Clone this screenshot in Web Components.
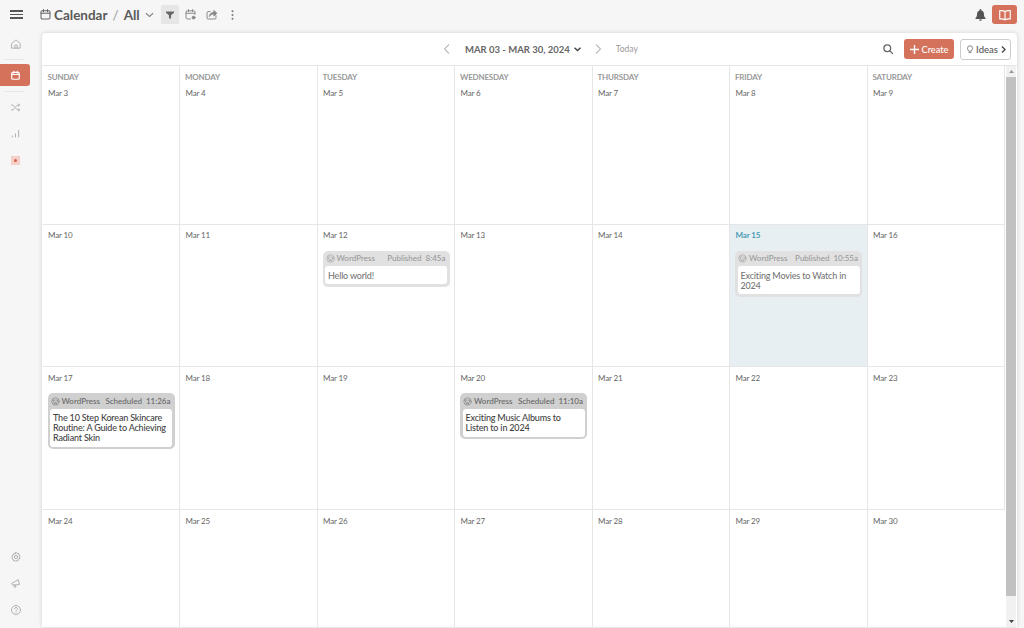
<!DOCTYPE html>
<html>
<head>
<meta charset="utf-8">
<title>Calendar</title>
<style>
html, body { margin: 0; height: 100%; overflow: hidden; background: #f6f6f6; }
body { font-family: "Lato", "Liberation Sans", sans-serif; color: #555; }
</style>
</head>
<body>
<app-shell></app-shell>
<script>
const ICONS = {
    home: '<path d="M2.5 7 8 2.5 13.5 7v6.5h-11z"/><path d="M6.5 13.5V9.5h3v4"/>',
    cal: '<rect x="2.5" y="3.5" width="11" height="10" rx="1.5"/><path d="M2.5 6.5h11M5.5 2v2.5M10.5 2v2.5"/>',
    shuffle: '<path d="M2 4.5h2.5l6 7H14M2 11.5h2.5l1.8-2.1M8.7 6.6l1.8-2.1H14M12.3 2.8 14 4.5l-1.7 1.7M12.3 9.8l1.7 1.7-1.7 1.7"/>',
    bars: '<path d="M3.5 13v-1.5M8 13V8.5M12.5 13V3.5"/>',
    gear: '<circle cx="8" cy="8" r="2.2"/><path d="M8 1.8l1.3 1.5 2-.2.4 1.9 1.8.9-.8 1.9.8 1.9-1.8.9-.4 1.9-2-.2L8 14.2l-1.3-1.5-2 .2-.4-1.9-1.8-.9.8-1.9-.8-1.9 1.8-.9.4-1.9 2 .2z"/>',
    horn: '<path d="M2.5 8.5 11 3.5l1.5 6.5-8.5.8z"/><path d="M5 11l1 2.8 2-.6-.8-2.6"/>',
    help: '<circle cx="8" cy="8" r="6"/><path d="M6.2 6.3a1.9 1.9 0 1 1 2.7 1.8c-.6.3-.9.7-.9 1.4"/><path d="M8 11.2v.4"/>',
    calplus: '<path d="M8 13.5H4A1.5 1.5 0 0 1 2.5 12V5A1.5 1.5 0 0 1 4 3.5h8A1.5 1.5 0 0 1 13.5 5v3M2.5 6.5h11M5.5 2v2.5M10.5 2v2.5"/><circle cx="11.8" cy="11.8" r="1.8" fill="currentColor"/>',
    share: '<path d="M13.5 9.5v3a1 1 0 0 1-1 1h-9a1 1 0 0 1-1-1v-7a1 1 0 0 1 1-1h3"/><path d="M5.5 10c.4-3 2.4-4.5 5.5-4.5V3l3.5 3.5L11 10V7.5c-2.3 0-4.1.7-5.5 2.500z" fill="currentColor"/>',
    search: '<circle cx="7" cy="7" r="4.5"/><path d="M10.5 10.5 14 14"/>',
    bulb: '<path d="M5.8 11C5 10 4 9 4 6.8a4 4 0 0 1 8 0C12 9 11 10 10.2 11z"/><path d="M6.3 13.5h3.400"/>',
    book: '<path d="M8 4C6.5 3 4.5 2.8 2 3v9.5c2.5-.2 4.5 0 6 1 1.5-1 3.5-1.2 6-1V3c-2.500-.2-4.500 0-6 1zM8 4v9.500"/>',
    wp: '<circle cx="8" cy="8" r="6.5"/><path d="M3.5 5.500 6.500 13 8 9l1.500 4 3-7.500M3 5.500h4M9 5.500h4"/>'
};

// stroke icon, name comes from the attribute
class XIcon extends HTMLElement {
    connectedCallback() {
        const size = this.getAttribute('size') || 16;
        const sw = this.getAttribute('sw') || 1.4;
        this.attachShadow({ mode: 'open' });
        this.shadowRoot.innerHTML = `
            <style>:host { display: inline-flex; } svg { display: block; }</style>
            <svg width="${size}" height="${size}" viewBox="0 0 16 16" fill="none" stroke="currentColor"
                 stroke-width="${sw}" stroke-linecap="round" stroke-linejoin="round">${ICONS[this.getAttribute('name')]}</svg>`;
    }
}
customElements.define('x-icon', XIcon);

class AppTopbar extends HTMLElement {
    constructor() {
        super();
        this.attachShadow({ mode: 'open' });
        this.shadowRoot.innerHTML = `
            <style>
                :host { display: flex; align-items: center; height: 33px; padding: 0 7px 4px 10px; box-sizing: border-box; color: #555; }
                .burger { display: flex; flex-direction: column; gap: 2px; width: 13px; margin-right: 16px; }
                .burger i { height: 1.5px; background: #555; display: block; }
                .title { display: flex; align-items: center; font-size: 13.5px; font-weight: 700; color: #5a5a5a; }
                .title x-icon { margin-right: 2px; color: #666; }
                .sep { margin: 0 5px; font-weight: 400; color: #999; }
                .chev { margin-left: 5px; }
                .act { width: 19px; height: 19px; margin-left: 2px; display: flex; align-items: center; justify-content: center; color: #888; border-radius: 2px; }
                .filter { background: #e6e6e6; width: 18px; margin-left: 7px; }
                .spacer { flex: 1; }
                .bell { color: #555; margin-right: 6px; display: flex; }
                .guide { width: 25px; height: 19px; background: #d4725c; border-radius: 3px; color: #fff; display: flex; align-items: center; justify-content: center; }
            </style>
            <div class="burger"><i></i><i></i><i></i></div>
            <div class="title">
                <x-icon name="cal" size="13" sw="1.3"></x-icon>Calendar<span class="sep">/</span>All
                <svg class="chev" width="9" height="6" viewBox="0 0 10 6" fill="none" stroke="#888" stroke-width="1.3"><path d="M1 1l4 3.5L9 1"/></svg>
            </div>
            <div class="act filter"><svg width="8" height="8" viewBox="0 0 10 10" fill="#666"><path d="M0 .5h10v1.8L6.3 5.2V9.5H3.7V5.2L0 2.3z"/></svg></div>
            <div class="act"><x-icon name="calplus" size="13" sw="1.2"></x-icon></div>
            <div class="act"><x-icon name="share" size="13" sw="1.2"></x-icon></div>
            <div class="act"><svg width="3" height="10" viewBox="0 0 3 11" fill="#777"><circle cx="1.5" cy="1.5" r="1.1"/><circle cx="1.5" cy="5.5" r="1.1"/><circle cx="1.5" cy="9.5" r="1.1"/></svg></div>
            <div class="spacer"></div>
            <div class="bell"><svg width="11" height="12" viewBox="0 0 12 13" fill="#555"><path d="M6 0c.6 0 1 .4 1 1v.5c1.8.5 2.8 2 2.8 4 0 2.3.5 3.3 1.7 4.5v.8H.5V10c1.2-1.2 1.7-2.2 1.7-4.5 0-2 1-3.5 2.8-4V1c0-.6.4-1 1-1zM4.500 11.500h3C7.500 12.500 6.800 13 6 13s-1.500-.5-1.500-1.500z"/></svg></div>
            <div class="guide"><x-icon name="book" size="14" sw="1.3"></x-icon></div>`;
    }
}
customElements.define('app-topbar', AppTopbar);

class AppSidebar extends HTMLElement {
    constructor() {
        super();
        this.attachShadow({ mode: 'open' });
        this.shadowRoot.innerHTML = `
            <style>
                :host { display: flex; flex-direction: column; width: 42px; flex: none; color: #aaa; padding-bottom: 1.5px; box-sizing: border-box; }
                .item { height: 21px; display: flex; align-items: center; justify-content: center; padding-right: 11px; }
                hr { border: 0; border-top: 1px solid #e8e8e8; margin: 5px 17px 0 5px; }
                .active { width: 30px; height: 22px; background: #d4725c; border-radius: 0 3px 3px 0; color: #fff; padding: 0; margin-top: 4px; }
                .low { margin-top: 5.5px; }
                .first-low { margin-top: 4.5px; }
                .gap { flex: 1; }
                .red { width: 9px; height: 9px; background: #f6cfc8; display: flex; align-items: center; justify-content: center; }
                .red i { width: 3px; height: 3px; border-radius: 50%; background: #d9604a; display: block; }
                .bot { margin-bottom: 5.5px; }
            </style>
            <div class="item"><x-icon name="home" size="12" sw="1.2"></x-icon></div>
            <hr>
            <div class="item active"><x-icon name="cal" size="11" sw="1.7"></x-icon></div>
            <hr style="margin-top:5px">
            <div class="item first-low"><x-icon name="shuffle" size="11" sw="1.3"></x-icon></div>
            <div class="item low"><x-icon name="bars" size="11" sw="1.3"></x-icon></div>
            <div class="item low"><span class="red"><i></i></span></div>
            <div class="gap"></div>
            <div class="item bot"><x-icon name="gear" size="12" sw="1.2"></x-icon></div>
            <div class="item bot"><x-icon name="horn" size="12" sw="1.2"></x-icon></div>
            <div class="item bot"><x-icon name="help" size="12" sw="1.2"></x-icon></div>`;
    }
}
customElements.define('app-sidebar', AppSidebar);

class CalToolbar extends HTMLElement {
    constructor() {
        super();
        this.attachShadow({ mode: 'open' });
        this.shadowRoot.innerHTML = `
            <style>
                :host { display: flex; align-items: center; height: 33px; box-sizing: border-box; border-bottom: 1px solid #e6e6e6; padding: 0 6px 0 401px; }
                .mid { display: flex; align-items: center; flex: 1; }
                .range { font-size: 9.5px; font-weight: 700; color: #666; margin: 0 14px 0 15px; display: flex; align-items: center; gap: 4px; white-space: nowrap; }
                .today { font-size: 8.5px; color: #999; margin-left: 14px; }
                .right { display: flex; align-items: center; }
                .search { color: #666; margin-right: 10px; display: flex; }
                .create { height: 20px; width: 50px; box-sizing: border-box; background: #d4725c; color: #fff; border-radius: 3px; font-size: 9.2px; font-weight: 500; display: flex; align-items: center; justify-content: center; gap: 3px; margin-right: 6px; }
                .ideas { height: 21px; width: 51px; box-sizing: border-box; background: #fff; color: #555; border: 1px solid #ccc; border-radius: 3px; font-size: 9.5px; font-weight: 500; display: flex; align-items: center; justify-content: center; gap: 1px; }
                .ideas svg { margin-left: 2px; }
            </style>
            <div class="mid">
                <svg width="7" height="10" viewBox="0 0 7 10" fill="none" stroke="#bbb" stroke-width="1.1"><path d="M6 .5 1.5 5 6 9.5"/></svg>
                <div class="range">MAR 03 - MAR 30, 2024
                    <svg width="7" height="5" viewBox="0 0 7 5" fill="none" stroke="#444" stroke-width="1.5"><path d="M.5.8l3 2.7 3-2.7"/></svg>
                </div>
                <svg width="7" height="10" viewBox="0 0 7 10" fill="none" stroke="#bbb" stroke-width="1.1"><path d="M1 .5 5.5 5 1 9.5"/></svg>
                <div class="today">Today</div>
            </div>
            <div class="right">
                <div class="search"><x-icon name="search" size="12" sw="1.7"></x-icon></div>
                <div class="create"><svg width="9" height="9" viewBox="0 0 9 9" stroke="#fff" stroke-width="1.4"><path d="M4.5 0v9M0 4.5h9"/></svg>Create</div>
                <div class="ideas"><x-icon name="bulb" size="10" sw="1.1"></x-icon>Ideas<svg width="5" height="7" viewBox="0 0 5 7" fill="none" stroke="#444" stroke-width="1.3"><path d="M1 .5 4 3.5 1 6.5"/></svg></div>
            </div>`;
    }
}
customElements.define('cal-toolbar', CalToolbar);

class CalDay extends HTMLElement {
    constructor() {
        super();
        this.attachShadow({ mode: 'open' });
        this.shadowRoot.innerHTML = `
            <style>
                :host { display: block; box-sizing: border-box; border-right: 1px solid #e6e6e6; border-bottom: 1px solid #e6e6e6; padding: 5.5px 4.5px 0 5px; min-width: 0; }
                :host([today]) { background: #e8eff2; }
                :host(:last-child) { border-right: 0; }
                .head { font-size: 8px; font-weight: 700; letter-spacing: -.2px; color: #999; line-height: 10px; height: 10px; margin: 0 0 6.5px 0; display: none; }
                :host([week]) .head { display: block; }
                .date { font-size: 8px; letter-spacing: -.15px; color: #666; line-height: 11px; height: 11px; margin: 0 0 9.5px .5px; }
                :host([today]) .date { color: #4a9bb5; font-weight: 700; }
            </style>
            <div class="head"></div>
            <div class="date"></div>
            <slot></slot>`;
    }
    connectedCallback() {
        this.shadowRoot.querySelector('.head').textContent = this.getAttribute('week') || '';
        this.shadowRoot.querySelector('.date').textContent = this.getAttribute('date');
    }
}
customElements.define('cal-day', CalDay);

class PostCard extends HTMLElement {
    constructor() {
        super();
        this.attachShadow({ mode: 'open' });
        this.shadowRoot.innerHTML = `
            <style>
                :host { display: block; background: #d0d0d0; border-radius: 5px; padding: 0 2.5px 2.5px; color: #3f3f3f; }
                :host([state="Published"]) { background: #e1e1e1; color: #777; }
                .top { display: flex; align-items: center; height: 15.5px; font-size: 8px; font-weight: 500; padding: 0 1.5px 0 .5px; white-space: nowrap; color: #666; }
                :host([state="Published"]) .top { color: #999; }
                .wp { margin-right: 2px; flex: none; color: #888; }
                :host([state="Published"]) .wp { color: #aaa; }
                .name { flex: 1; }
                .state { margin-right: 4px; }
                .body { background: #fff; border-radius: 3px; padding: 4.5px 2px 3.5px 3px; font-size: 9px; letter-spacing: -.18px; font-weight: 500; line-height: 10px; }
            </style>
            <div class="top"><x-icon class="wp" name="wp" size="9" sw="1.3"></x-icon><span class="name">WordPress</span><span class="state"></span><span class="time"></span></div>
            <div class="body"><slot></slot></div>`;
    }
    connectedCallback() {
        this.shadowRoot.querySelector('.state').textContent = this.getAttribute('state');
        this.shadowRoot.querySelector('.time').textContent = this.getAttribute('time');
    }
}
customElements.define('post-card', PostCard);

class CalGrid extends HTMLElement {
    constructor() {
        super();
        this.attachShadow({ mode: 'open' });
        this.shadowRoot.innerHTML = `
            <style>
                :host { display: grid; grid-template-columns: repeat(7, 137.5px); grid-template-rows: 158.7px 142.7px 142.7px 142.7px; flex: 1; min-width: 0; overflow: hidden; padding-left: .5px; }
            </style>
            <slot></slot>`;
    }
}
customElements.define('cal-grid', CalGrid);

class CalScrollbar extends HTMLElement {
    constructor() {
        super();
        this.attachShadow({ mode: 'open' });
        this.shadowRoot.innerHTML = `
            <style>
                :host { display: flex; flex-direction: column; width: 10px; flex: none; background: #f1f1f1; align-items: center; margin-right: 1px; }
                .btn { height: 11px; display: flex; align-items: center; justify-content: center; flex: none; }
                .thumb { flex: 1; align-self: stretch; background: #c1c1c1; margin-bottom: 20px; }
            </style>
            <div class="btn"><svg width="5" height="3" viewBox="0 0 5 3" fill="#999"><path d="M2.5 0 5 3H0z"/></svg></div>
            <div class="thumb"></div>
            <div class="btn"><svg width="5" height="3" viewBox="0 0 5 3" fill="#444"><path d="M0 0h5L2.5 3z"/></svg></div>`;
    }
}
customElements.define('cal-scrollbar', CalScrollbar);

class AppShell extends HTMLElement {
    constructor() {
        super();
        this.attachShadow({ mode: 'open' });
        const start = 3;
        const weeks = ['SUNDAY', 'MONDAY', 'TUESDAY', 'WEDNESDAY', 'THURSDAY', 'FRIDAY', 'SATURDAY'];
        const posts = {
            12: '<post-card state="Published" time="8:45a">Hello world!</post-card>',
            15: '<post-card state="Published" time="10:55a">Exciting Movies to Watch in 2024</post-card>',
            17: '<post-card state="Scheduled" time="11:26a">The 10 Step Korean Skincare Routine: A Guide to Achieving Radiant Skin</post-card>',
            20: '<post-card state="Scheduled" time="11:10a">Exciting Music Albums to Listen to in 2024</post-card>'
        };
        let days = '';
        for (let i = 0; i < 28; i++) {
            const d = start + i;
            const week = i < 7 ? ` week="${weeks[i]}"` : '';
            const today = d === 15 ? ' today' : '';
            days += `<cal-day date="Mar ${d}"${week}${today}>${posts[d] || ''}</cal-day>`;
        }
        this.shadowRoot.innerHTML = `
            <style>
                :host { display: flex; flex-direction: column; height: 628px; overflow: hidden; padding-bottom: 1px; box-sizing: border-box; }
                .row { display: flex; flex: 1; min-height: 0; }
                .card { width: 975px; flex: none; background: #fff; border-radius: 4px 4px 0 0; box-shadow: 0 0 4px rgba(0,0,0,.16); display: flex; flex-direction: column; min-height: 0; }
                .body { display: flex; flex: 1; min-height: 0; }
            </style>
            <app-topbar></app-topbar>
            <div class="row">
                <app-sidebar></app-sidebar>
                <div class="card">
                    <cal-toolbar></cal-toolbar>
                    <div class="body">
                        <cal-grid>${days}</cal-grid>
                        <cal-scrollbar></cal-scrollbar>
                    </div>
                </div>
            </div>`;
    }
}
customElements.define('app-shell', AppShell);
</script>
</body>
</html>
